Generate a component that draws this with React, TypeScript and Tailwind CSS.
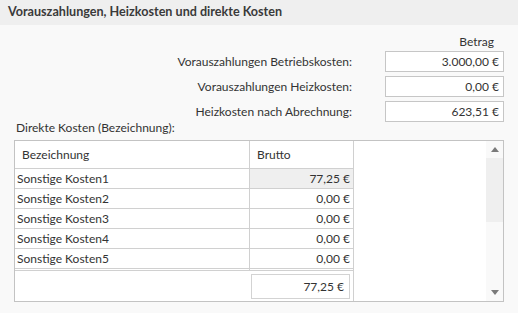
const rows = [
  { name: "Sonstige Kosten1", brutto: "77,25 €", selected: true },
  { name: "Sonstige Kosten2", brutto: "0,00 €" },
  { name: "Sonstige Kosten3", brutto: "0,00 €" },
  { name: "Sonstige Kosten4", brutto: "0,00 €" },
  { name: "Sonstige Kosten5", brutto: "0,00 €" },
];

const fields = [
  { label: "Vorauszahlungen Betriebskosten:", value: "3.000,00 €" },
  { label: "Vorauszahlungen Heizkosten:", value: "0,00 €" },
  { label: "Heizkosten nach Abrechnung:", value: "623,51 €" },
];

function AmountField({ label, value }: { label: string; value: string }) {
  return (
    <div className="flex items-center h-[21px]">
      <div className="w-[338px] text-right">{label}</div>
      <div className="ml-[33px] w-[119px] h-[21px] bg-white border border-[#c6c6c6] text-right pr-[4px] leading-[19px]">
        {value}
      </div>
    </div>
  );
}

export default function App() {
  return (
    <div
      className="w-[518px] h-[313px] bg-[#f9f9f9] text-[#333333] text-[12px] overflow-hidden"
      style={{ fontFamily: 'Lato, "Open Sans", sans-serif' }}
    >
      <div className="h-[25px] bg-[#efefef] flex items-center px-[8px] text-[12.6px] font-bold text-[#3a3a3a]">
        Vorauszahlungen, Heizkosten und direkte Kosten
      </div>

      <div className="px-[14px]">
        <div className="mt-[9px] h-[16px] leading-[16px] text-right pr-[10px]">Betrag</div>
        <div className="mt-[1px] flex flex-col gap-[4px]">
          {fields.map((f) => (
            <AmountField key={f.label} label={f.label} value={f.value} />
          ))}
        </div>

        <div className="mt-[-1px] h-[14px] leading-[14px] pl-[2px]">Direkte Kosten (Bezeichnung):</div>

        <div className="mt-[5px] h-[162px] border border-[#c3c3c3] bg-white flex">
          <div className="w-[339px] flex flex-col border-r border-[#d0d0d0]">
            <div className="flex h-[28px] border-b border-[#d0d0d0]">
              <div className="w-[235px] border-r border-[#d0d0d0] pl-[7px] flex items-center">Bezeichnung</div>
              <div className="flex-1 pl-[7px] flex items-center">Brutto</div>
            </div>
            {rows.map((r) => (
              <div key={r.name} className="flex h-[20px] border-b border-[#d0d0d0]">
                <div className="w-[235px] border-r border-[#d0d0d0] pl-[2px] leading-[19px]">{r.name}</div>
                <div className={`flex-1 text-right pr-[3px] leading-[19px] ${r.selected ? "bg-[#efefef]" : ""}`}>
                  {r.brutto}
                </div>
              </div>
            ))}
            <div className="flex h-[1px] border-b border-[#d0d0d0] box-content">
              <div className="w-[235px] border-r border-[#d0d0d0]" />
            </div>
            <div className="flex-1 flex justify-end pt-[3px] pr-[3px]">
              <div className="w-[99px] h-[25px] border border-[#d3d3d3] text-right pr-[5px] leading-[23px]">77,25 €</div>
            </div>
          </div>
          <div className="flex-1" />
          <div className="w-[17px] bg-[#f9f9f9] flex flex-col items-center">
            <div className="h-[17px] flex items-center justify-center">
              <svg width="8" height="5" viewBox="0 0 8 5">
                <path d="M0 5 L4 0 L8 5 Z" fill="#7a7a7a" />
              </svg>
            </div>
            <div className="w-full h-[64px] bg-[#efefef]" />
            <div className="flex-1" />
            <div className="h-[17px] flex items-center justify-center">
              <svg width="8" height="5" viewBox="0 0 8 5">
                <path d="M0 0 L8 0 L4 5 Z" fill="#7a7a7a" />
              </svg>
            </div>
          </div>
        </div>
      </div>
    </div>
  );
}
